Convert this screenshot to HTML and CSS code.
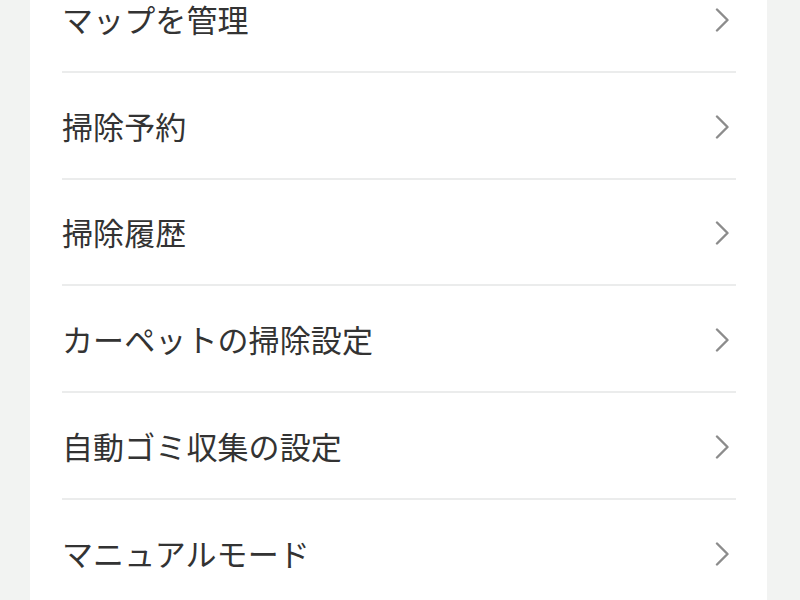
FILE: index.html
```html
<!DOCTYPE html>
<html lang="ja">
<head>
<meta charset="UTF-8">
<meta name="viewport" content="width=device-width, initial-scale=1.0">
<title>設定</title>
<link rel="stylesheet" href="styles.css">
</head>
<body>
<!-- メニュー一覧 -->
<ul class="menu">
 <li class="menu-item">
 <span class="menu-label">マップを管理</span>
 <svg class="chevron" viewBox="0 0 14 24"><path d="M2 1.5 L12.5 12 L2 22.5"/></svg>
 </li>
 <li class="menu-item">
 <span class="menu-label">掃除予約</span>
 <svg class="chevron" viewBox="0 0 14 24"><path d="M2 1.5 L12.5 12 L2 22.5"/></svg>
 </li>
 <li class="menu-item">
 <span class="menu-label">掃除履歴</span>
 <svg class="chevron" viewBox="0 0 14 24"><path d="M2 1.5 L12.5 12 L2 22.5"/></svg>
 </li>
 <li class="menu-item">
 <span class="menu-label">カーペットの掃除設定</span>
 <svg class="chevron" viewBox="0 0 14 24"><path d="M2 1.5 L12.5 12 L2 22.5"/></svg>
 </li>
 <li class="menu-item">
 <span class="menu-label">自動ゴミ収集の設定</span>
 <svg class="chevron" viewBox="0 0 14 24"><path d="M2 1.5 L12.5 12 L2 22.5"/></svg>
 </li>
 <li class="menu-item">
 <span class="menu-label">マニュアルモード</span>
 <svg class="chevron" viewBox="0 0 14 24"><path d="M2 1.5 L12.5 12 L2 22.5"/></svg>
 </li>
</ul>
</body>
</html>
```

FILE: styles.css
```css
html, body {
 height: 100%;
}
body {
 margin: 0;
 background-color: #f2f3f2;
 font-family: "Noto Sans CJK JP", "Noto Sans", sans-serif;
 overflow: hidden;
}
.menu {
 list-style: none;
 margin: -34px 0 0 30px;
 padding: 0 31px 0 32px;
 width: 737px;
 box-sizing: border-box;
 background-color: #fff;
 min-height: 700px;
}
.menu-item {
 display: flex;
 align-items: center;
 justify-content: space-between;
 height: 106.75px;
 box-sizing: border-box;
 border-bottom: 2px solid #ebecec;
 padding-right: 7px;
}
.menu-label {
 font-size: 31px;
 color: #333;
 letter-spacing: 0.1px;
}
.chevron {
 width: 14px;
 height: 24px;
 margin-top: 3px;
 fill: none;
 stroke: #8c8c8c;
 stroke-width: 2.4;
 stroke-linecap: round;
 stroke-linejoin: round;
}
```
